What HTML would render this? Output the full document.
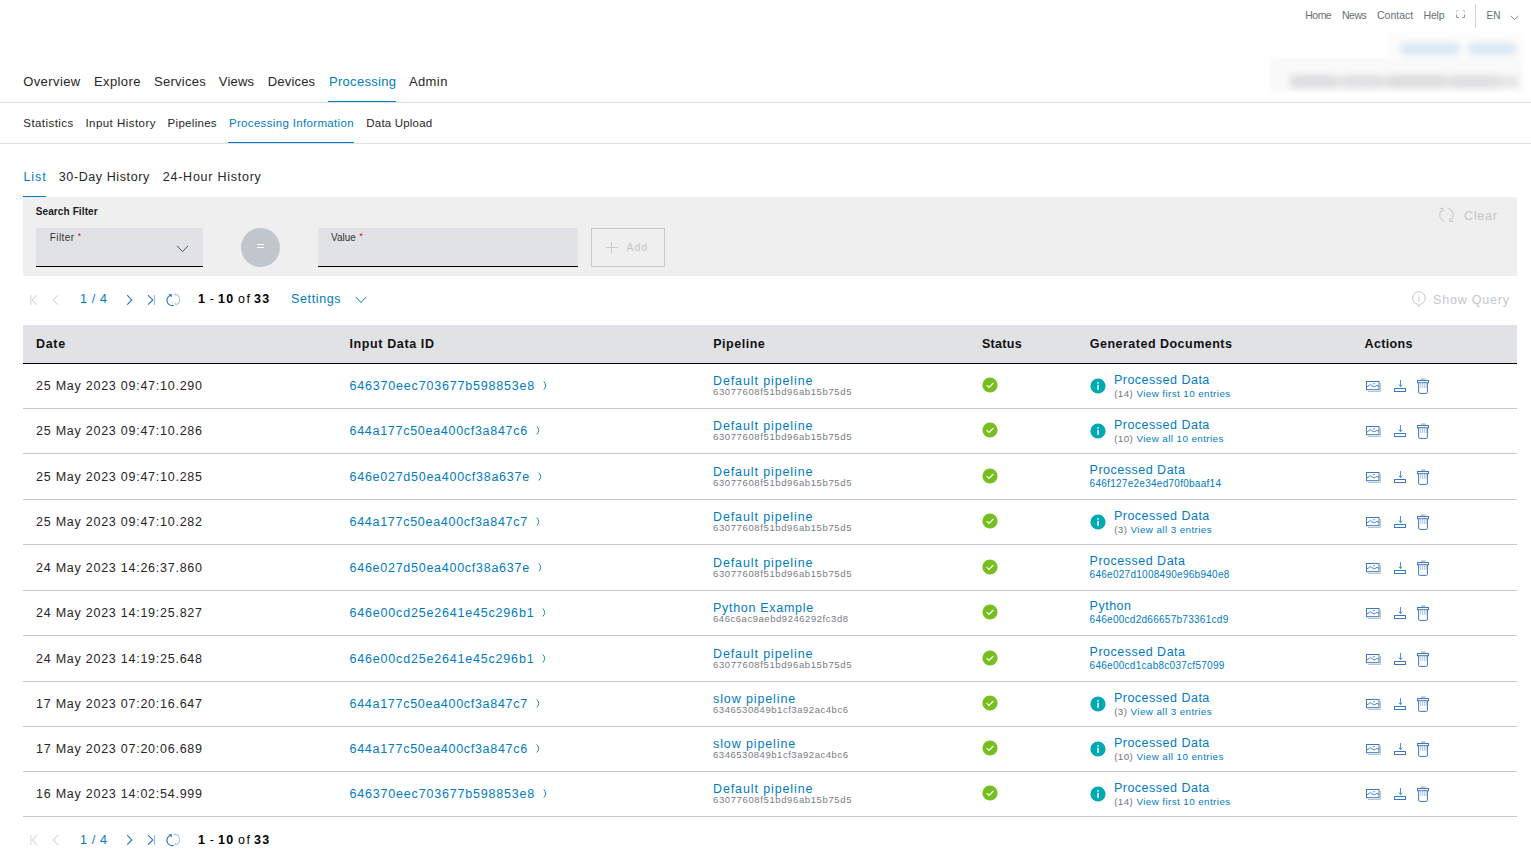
<!DOCTYPE html>
<html><head><meta charset="utf-8"><style>
html,body{margin:0;padding:0;background:#fff;}
body{width:1531px;height:862px;position:relative;overflow:hidden;font-family:"Liberation Sans",sans-serif;}
.t{position:absolute;white-space:nowrap;}
.b{position:absolute;}
svg.b{overflow:visible}
</style></head><body>
<div class="t" style="left:1305.30px;top:10.00px;font-size:10.5px;line-height:10.5px;color:#686d72;letter-spacing:-0.533px;">Home</div>
<div class="t" style="left:1342.00px;top:10.00px;font-size:10.5px;line-height:10.5px;color:#686d72;letter-spacing:-0.517px;">News</div>
<div class="t" style="left:1377.00px;top:10.00px;font-size:10.5px;line-height:10.5px;color:#686d72;letter-spacing:0.017px;">Contact</div>
<div class="t" style="left:1423.50px;top:10.00px;font-size:10.5px;line-height:10.5px;color:#686d72;letter-spacing:-0.167px;">Help</div>
<div class="t" style="left:1486.50px;top:11.00px;font-size:10px;line-height:10px;color:#686d72;letter-spacing:0.000px;">EN</div>
<svg class="b" style="left:1455px;top:9px" width="11" height="10" viewBox="0 0 11 10"><path d="M1.5 3.5V1.5H3.5M7.5 1.5H9.5V3.5" fill="none" stroke="#c4c8cc" stroke-width="0.9"/><path d="M9.5 5.5V8.5H7M4 8.5H1.5V5.5" fill="none" stroke="#8a9097" stroke-width="0.9"/></svg>
<div class="b" style="left:1475px;top:4px;width:1px;height:24px;background:#d0d4d8"></div>
<svg class="b" style="left:1509.5px;top:14.5px" width="10" height="7" viewBox="0 0 10 7"><path d="M0.8 0.8L4.6 4.6L8.4 0.8" fill="none" stroke="#7b8085" stroke-width="0.9"/></svg>
<div class="b" style="left:1270px;top:58px;width:253px;height:34px;background:#f9f9f9;filter:blur(2.5px)"></div>
<div class="b" style="left:1385px;top:32px;width:138px;height:26px;background:#fcfcfc;filter:blur(3px)"></div>
<div class="b" style="left:1400px;top:43px;width:60px;height:12px;background:#d9e7f2;filter:blur(3.5px);border-radius:4px"></div>
<div class="b" style="left:1468px;top:43px;width:48px;height:12px;background:#d9e7f2;filter:blur(3.5px);border-radius:4px"></div>
<div class="b" style="left:1290px;top:76px;width:228px;height:11px;background:#e4e5e6;filter:blur(3px)"></div>
<div class="b" style="left:1292px;top:77px;width:44px;height:9px;background:#dcdddf;filter:blur(3.5px)"></div>
<div class="b" style="left:1344px;top:77px;width:36px;height:9px;background:#dfe0e2;filter:blur(3.5px)"></div>
<div class="b" style="left:1389px;top:77px;width:56px;height:9px;background:#dddcd6;filter:blur(3.5px)"></div>
<div class="b" style="left:1452px;top:77px;width:46px;height:9px;background:#dedfe1;filter:blur(3.5px)"></div>
<div class="t" style="left:23.20px;top:75.00px;font-size:13px;line-height:13px;color:#262626;letter-spacing:0.407px;">Overview</div>
<div class="t" style="left:94.00px;top:75.00px;font-size:13px;line-height:13px;color:#262626;letter-spacing:0.383px;">Explore</div>
<div class="t" style="left:154.10px;top:75.00px;font-size:13px;line-height:13px;color:#262626;letter-spacing:0.250px;">Services</div>
<div class="t" style="left:218.80px;top:75.00px;font-size:13px;line-height:13px;color:#262626;letter-spacing:0.187px;">Views</div>
<div class="t" style="left:267.80px;top:75.00px;font-size:13px;line-height:13px;color:#262626;letter-spacing:0.175px;">Devices</div>
<div class="t" style="left:328.90px;top:75.00px;font-size:13px;line-height:13px;color:#007bc0;letter-spacing:0.322px;">Processing</div>
<div class="t" style="left:408.90px;top:75.00px;font-size:13px;line-height:13px;color:#262626;letter-spacing:0.412px;">Admin</div>
<div class="b" style="left:0px;top:102px;width:1531px;height:1px;background:#dfe0e1"></div>
<div class="b" style="left:328px;top:101px;width:68px;height:1px;background:#007bc0"></div>
<div class="t" style="left:23.30px;top:118.00px;font-size:11.5px;line-height:11.5px;color:#262626;letter-spacing:0.433px;">Statistics</div>
<div class="t" style="left:85.40px;top:118.00px;font-size:11.5px;line-height:11.5px;color:#262626;letter-spacing:0.462px;">Input History</div>
<div class="t" style="left:167.60px;top:118.00px;font-size:11.5px;line-height:11.5px;color:#262626;letter-spacing:0.294px;">Pipelines</div>
<div class="t" style="left:228.90px;top:118.00px;font-size:11.5px;line-height:11.5px;color:#007bc0;letter-spacing:0.338px;">Processing Information</div>
<div class="t" style="left:366.30px;top:118.00px;font-size:11.5px;line-height:11.5px;color:#262626;letter-spacing:0.195px;">Data Upload</div>
<div class="b" style="left:0px;top:143px;width:1531px;height:1px;background:#dfe0e1"></div>
<div class="b" style="left:228px;top:142px;width:126px;height:1px;background:#007bc0"></div>
<div class="t" style="left:23.50px;top:171.00px;font-size:12.5px;line-height:12.5px;color:#007bc0;letter-spacing:0.883px;">List</div>
<div class="t" style="left:58.80px;top:171.00px;font-size:12.5px;line-height:12.5px;color:#262626;letter-spacing:0.596px;">30-Day History</div>
<div class="t" style="left:162.80px;top:171.00px;font-size:12.5px;line-height:12.5px;color:#262626;letter-spacing:0.750px;">24-Hour History</div>
<div class="b" style="left:23px;top:196px;width:23px;height:1px;background:#007bc0"></div>
<div class="b" style="left:23px;top:197px;width:1494px;height:79px;background:#efefef"></div>
<div class="t" style="left:35.70px;top:207.00px;font-size:10px;line-height:10px;color:#1a1a1a;font-weight:bold;letter-spacing:0.117px;">Search Filter</div>
<div class="b" style="left:36px;top:228px;width:167px;height:38px;background:#e0e2e5;border-bottom:1px solid #000"></div>
<div class="t" style="left:49.70px;top:233.00px;font-size:10px;line-height:10px;color:#333;letter-spacing:0.440px;">Filter</div>
<div class="t" style="left:77.70px;top:232.00px;font-size:8.5px;line-height:8.5px;color:#e0001b;letter-spacing:0.000px;">*</div>
<svg class="b" style="left:176px;top:245px" width="13" height="8" viewBox="0 0 13 8"><path d="M1 0.8L6.5 6.6L12 0.8" fill="none" stroke="#444" stroke-width="0.9"/></svg>
<div class="b" style="left:241px;top:228px;width:39px;height:39px;border-radius:50%;background:#c1c6cc"></div>
<div class="b" style="left:257px;top:244px;width:7px;height:1px;background:#fff"></div>
<div class="b" style="left:257px;top:247px;width:7px;height:1px;background:#fff"></div>
<div class="b" style="left:318px;top:228px;width:260px;height:38px;background:#e0e2e5;border-bottom:1px solid #000"></div>
<div class="t" style="left:331.00px;top:233.00px;font-size:10px;line-height:10px;color:#333;letter-spacing:0.012px;">Value</div>
<div class="t" style="left:359.50px;top:232.00px;font-size:8.5px;line-height:8.5px;color:#e0001b;letter-spacing:0.000px;">*</div>
<div class="b" style="left:591px;top:228px;width:74px;height:39px;border:1px solid #c4cad0;box-sizing:border-box"></div>
<div class="b" style="left:606px;top:247px;width:12px;height:1px;background:#c4cad0"></div>
<div class="b" style="left:611px;top:242px;width:1px;height:11px;background:#c4cad0"></div>
<div class="t" style="left:626.60px;top:242.00px;font-size:10.5px;line-height:10.5px;color:#c1c7cc;letter-spacing:0.850px;">Add</div>
<svg class="b" style="left:1437px;top:206px" width="18" height="18" viewBox="0 0 18 18"><path d="M7.7 15.6A6.8 6.8 0 0 1 5.1 3.8M10.7 2.3A6.8 6.8 0 0 1 13.9 14.2M2.6 2.3H6V5.6M12.9 12V15.4H16.4" fill="none" stroke="#c1c7cc" stroke-width="1"/></svg>
<div class="t" style="left:1464.00px;top:210.00px;font-size:12.5px;line-height:12.5px;color:#c1c7cc;letter-spacing:0.737px;">Clear</div>
<svg class="b" style="left:25px;top:290px" width="160" height="20" viewBox="0 0 160 20"><path d="M5.8 5V15M12 5L7.3 10L12 15M33.2 5L28.3 10L33.2 15" fill="none" stroke="#dde1e4" stroke-width="1.4"/><path d="M102.2 5.2L106.8 9.9L102.2 14.6M123 5.2L127.8 9.9L123 14.6" fill="none" stroke="#1f74c2" stroke-width="1.1"/><path d="M129.4 5V15" stroke="#8fb6de" stroke-width="1"/><path d="M145.8 5.2A5.2 5.2 0 0 0 148.6 15.4" fill="none" stroke="#1f74c2" stroke-width="1.1"/><path d="M144.3 4.6H146.4V6.7Z" fill="#1f74c2" stroke="#1f74c2" stroke-width="0.8"/><path d="M148.8 4.4A5.2 5.2 0 0 1 151.8 14.2" fill="none" stroke="#a9c6e3" stroke-width="1.1"/><path d="M150.4 12.5V14.6H152.5" fill="none" stroke="#a9c6e3" stroke-width="0.9"/></svg>
<div class="t" style="left:80.00px;top:293.00px;font-size:12.5px;line-height:12.5px;color:#007bc0;letter-spacing:0.675px;">1 / 4</div>
<div class="t" style="left:198.00px;top:293.00px;font-size:12.5px;line-height:12.5px;color:#000;font-weight:bold;letter-spacing:0.000px;">1</div>
<div class="t" style="left:209.70px;top:293.00px;font-size:12.5px;line-height:12.5px;color:#000;letter-spacing:0.000px;">-</div>
<div class="t" style="left:218.00px;top:293.00px;font-size:12.5px;line-height:12.5px;color:#000;font-weight:bold;letter-spacing:1.400px;">10</div>
<div class="t" style="left:238.00px;top:293.00px;font-size:12.5px;line-height:12.5px;color:#000;letter-spacing:1.550px;">of</div>
<div class="t" style="left:254.00px;top:293.00px;font-size:12.5px;line-height:12.5px;color:#000;font-weight:bold;letter-spacing:1.200px;">33</div>
<div class="t" style="left:291.00px;top:293.00px;font-size:12.5px;line-height:12.5px;color:#007bc0;letter-spacing:0.636px;">Settings</div>
<svg class="b" style="left:355px;top:296px" width="12" height="8" viewBox="0 0 12 8"><path d="M0.8 1L6 6.5L11.2 1" fill="none" stroke="#007bc0" stroke-width="1"/></svg>
<svg class="b" style="left:1410px;top:290px" width="17" height="18" viewBox="0 0 17 18"><path d="M7.6 14.2A6.3 6.3 0 1 1 10.2 14.2L8.9 16.6Z" fill="none" stroke="#c1c7cc" stroke-width="1"/><path d="M8.9 6.5V11.5M8.9 4.3V5.4" stroke="#c1c7cc" stroke-width="1"/></svg>
<div class="t" style="left:1433.00px;top:294.00px;font-size:12.5px;line-height:12.5px;color:#c1c7cc;letter-spacing:0.800px;">Show Query</div>
<div class="b" style="left:23px;top:325px;width:1494px;height:38px;background:#e0e2e5"></div>
<div class="b" style="left:23px;top:363px;width:1494px;height:1px;background:#000"></div>
<div class="t" style="left:36.10px;top:338.00px;font-size:12.5px;line-height:12.5px;color:#111;font-weight:bold;letter-spacing:0.633px;">Date</div>
<div class="t" style="left:349.50px;top:338.00px;font-size:12.5px;line-height:12.5px;color:#111;font-weight:bold;letter-spacing:0.617px;">Input Data ID</div>
<div class="t" style="left:713.20px;top:338.00px;font-size:12.5px;line-height:12.5px;color:#111;font-weight:bold;letter-spacing:0.521px;">Pipeline</div>
<div class="t" style="left:981.90px;top:338.00px;font-size:12.5px;line-height:12.5px;color:#111;font-weight:bold;letter-spacing:0.300px;">Status</div>
<div class="t" style="left:1089.80px;top:338.00px;font-size:12.5px;line-height:12.5px;color:#111;font-weight:bold;letter-spacing:0.486px;">Generated Documents</div>
<div class="t" style="left:1364.60px;top:338.00px;font-size:12.5px;line-height:12.5px;color:#111;font-weight:bold;letter-spacing:0.342px;">Actions</div>
<div class="b" style="left:23px;top:408px;width:1494px;height:1px;background:#c4c9ce"></div>
<div class="t" style="left:36.00px;top:380.00px;font-size:12.5px;line-height:12.5px;color:#262626;letter-spacing:0.752px;">25 May 2023 09:47:10.290</div>
<div class="t" style="left:349.50px;top:380.00px;font-size:12.5px;line-height:12.5px;color:#007bc0;letter-spacing:0.811px;">646370eec703677b598853e8</div>
<svg class="b" style="left:542.8px;top:381.4px" width="5" height="9" viewBox="0 0 5 9"><path d="M0.8 0.5Q4.6 4.5 0.8 8.5" fill="none" stroke="#007bc0" stroke-width="0.9"/></svg>
<div class="t" style="left:713.00px;top:375.00px;font-size:12.5px;line-height:12.5px;color:#007bc0;letter-spacing:0.883px;">Default pipeline</div>
<div class="t" style="left:713.00px;top:387.00px;font-size:9.5px;line-height:9.5px;color:#777c81;letter-spacing:0.620px;">63077608f51bd96ab15b75d5</div>
<svg class="b" style="left:981.5px;top:377.2px" width="16" height="16" viewBox="0 0 16 16"><circle cx="8" cy="8" r="7.6" fill="#78be20"/><path d="M4.6 8.2L7 10.4L11.4 6" fill="none" stroke="#fff" stroke-width="1.1"/></svg>
<svg class="b" style="left:1089.5px;top:378.1px" width="16" height="16" viewBox="0 0 16 16"><circle cx="8" cy="8" r="7.6" fill="#00a8b0"/><rect x="7.3" y="6.8" width="1.5" height="5" fill="#fff"/><rect x="7.3" y="4.2" width="1.5" height="1.5" fill="#fff"/></svg>
<div class="t" style="left:1113.90px;top:374.00px;font-size:12.5px;line-height:12.5px;color:#007bc0;letter-spacing:0.500px;">Processed Data</div>
<div class="t" style="left:1114.20px;top:389.00px;font-size:9.8px;line-height:9.8px;color:#71767c;letter-spacing:0.420px;">(14)</div>
<div class="t" style="left:1136.45px;top:389.00px;font-size:9.8px;line-height:9.8px;color:#007bc0;letter-spacing:0.420px;">View first 10 entries</div>
<svg class="b" style="left:1360px;top:376px" width="75" height="20" viewBox="0 0 75 20"><path d="M20.5 7V15.5H8" fill="none" stroke="#b9c7d3" stroke-width="1"/><rect x="6.5" y="5.5" width="12.5" height="8.2" fill="none" stroke="#3b79c1" stroke-width="1"/><path d="M7 11L10.5 8.6L14 11L17 9.4L19 10.5" fill="none" stroke="#3b79c1" stroke-width="0.9"/><circle cx="14" cy="7.8" r="0.8" fill="#3b79c1"/><path d="M40.5 4V10.5M38.8 8.6L40.5 10.6L42.2 8.6" fill="none" stroke="#3b85c9" stroke-width="0.9"/><rect x="34.5" y="12.5" width="11" height="3" fill="none" stroke="#3b79c1" stroke-width="1"/><rect x="61" y="2.3" width="4.6" height="1.8" fill="#b9c7d3"/><rect x="57.5" y="4.5" width="11" height="2.2" fill="none" stroke="#3b79c1" stroke-width="1"/><path d="M58.6 6.8V16.3Q58.6 17.4 59.7 17.4H66.3Q67.4 17.4 67.4 16.3V6.8" fill="none" stroke="#3b79c1" stroke-width="1"/><path d="M60.6 7V12M62.5 7V12M64.4 7V12M66.2 7V12" stroke="#a8b8dc" stroke-width="0.8"/></svg>
<div class="b" style="left:23px;top:453px;width:1494px;height:1px;background:#c4c9ce"></div>
<div class="t" style="left:36.00px;top:425.00px;font-size:12.5px;line-height:12.5px;color:#262626;letter-spacing:0.752px;">25 May 2023 09:47:10.286</div>
<div class="t" style="left:349.50px;top:425.00px;font-size:12.5px;line-height:12.5px;color:#007bc0;letter-spacing:0.715px;">644a177c50ea400cf3a847c6</div>
<svg class="b" style="left:535.7px;top:426.4px" width="5" height="9" viewBox="0 0 5 9"><path d="M0.8 0.5Q4.6 4.5 0.8 8.5" fill="none" stroke="#007bc0" stroke-width="0.9"/></svg>
<div class="t" style="left:713.00px;top:420.00px;font-size:12.5px;line-height:12.5px;color:#007bc0;letter-spacing:0.883px;">Default pipeline</div>
<div class="t" style="left:713.00px;top:432.00px;font-size:9.5px;line-height:9.5px;color:#777c81;letter-spacing:0.620px;">63077608f51bd96ab15b75d5</div>
<svg class="b" style="left:981.5px;top:422.2px" width="16" height="16" viewBox="0 0 16 16"><circle cx="8" cy="8" r="7.6" fill="#78be20"/><path d="M4.6 8.2L7 10.4L11.4 6" fill="none" stroke="#fff" stroke-width="1.1"/></svg>
<svg class="b" style="left:1089.5px;top:423.1px" width="16" height="16" viewBox="0 0 16 16"><circle cx="8" cy="8" r="7.6" fill="#00a8b0"/><rect x="7.3" y="6.8" width="1.5" height="5" fill="#fff"/><rect x="7.3" y="4.2" width="1.5" height="1.5" fill="#fff"/></svg>
<div class="t" style="left:1113.90px;top:419.00px;font-size:12.5px;line-height:12.5px;color:#007bc0;letter-spacing:0.500px;">Processed Data</div>
<div class="t" style="left:1114.20px;top:434.00px;font-size:9.8px;line-height:9.8px;color:#71767c;letter-spacing:0.420px;">(10)</div>
<div class="t" style="left:1136.45px;top:434.00px;font-size:9.8px;line-height:9.8px;color:#007bc0;letter-spacing:0.420px;">View all 10 entries</div>
<svg class="b" style="left:1360px;top:421px" width="75" height="20" viewBox="0 0 75 20"><path d="M20.5 7V15.5H8" fill="none" stroke="#b9c7d3" stroke-width="1"/><rect x="6.5" y="5.5" width="12.5" height="8.2" fill="none" stroke="#3b79c1" stroke-width="1"/><path d="M7 11L10.5 8.6L14 11L17 9.4L19 10.5" fill="none" stroke="#3b79c1" stroke-width="0.9"/><circle cx="14" cy="7.8" r="0.8" fill="#3b79c1"/><path d="M40.5 4V10.5M38.8 8.6L40.5 10.6L42.2 8.6" fill="none" stroke="#3b85c9" stroke-width="0.9"/><rect x="34.5" y="12.5" width="11" height="3" fill="none" stroke="#3b79c1" stroke-width="1"/><rect x="61" y="2.3" width="4.6" height="1.8" fill="#b9c7d3"/><rect x="57.5" y="4.5" width="11" height="2.2" fill="none" stroke="#3b79c1" stroke-width="1"/><path d="M58.6 6.8V16.3Q58.6 17.4 59.7 17.4H66.3Q67.4 17.4 67.4 16.3V6.8" fill="none" stroke="#3b79c1" stroke-width="1"/><path d="M60.6 7V12M62.5 7V12M64.4 7V12M66.2 7V12" stroke="#a8b8dc" stroke-width="0.8"/></svg>
<div class="b" style="left:23px;top:499px;width:1494px;height:1px;background:#c4c9ce"></div>
<div class="t" style="left:36.00px;top:471.00px;font-size:12.5px;line-height:12.5px;color:#262626;letter-spacing:0.752px;">25 May 2023 09:47:10.285</div>
<div class="t" style="left:349.50px;top:471.00px;font-size:12.5px;line-height:12.5px;color:#007bc0;letter-spacing:0.737px;">646e027d50ea400cf38a637e</div>
<svg class="b" style="left:537.6px;top:472.4px" width="5" height="9" viewBox="0 0 5 9"><path d="M0.8 0.5Q4.6 4.5 0.8 8.5" fill="none" stroke="#007bc0" stroke-width="0.9"/></svg>
<div class="t" style="left:713.00px;top:466.00px;font-size:12.5px;line-height:12.5px;color:#007bc0;letter-spacing:0.883px;">Default pipeline</div>
<div class="t" style="left:713.00px;top:478.00px;font-size:9.5px;line-height:9.5px;color:#777c81;letter-spacing:0.620px;">63077608f51bd96ab15b75d5</div>
<svg class="b" style="left:981.5px;top:468.2px" width="16" height="16" viewBox="0 0 16 16"><circle cx="8" cy="8" r="7.6" fill="#78be20"/><path d="M4.6 8.2L7 10.4L11.4 6" fill="none" stroke="#fff" stroke-width="1.1"/></svg>
<div class="t" style="left:1089.60px;top:464.00px;font-size:12.5px;line-height:12.5px;color:#007bc0;letter-spacing:0.500px;">Processed Data</div>
<div class="t" style="left:1089.60px;top:479.00px;font-size:10px;line-height:10px;color:#007bc0;letter-spacing:0.272px;">646f127e2e34ed70f0baaf14</div>
<svg class="b" style="left:1360px;top:467px" width="75" height="20" viewBox="0 0 75 20"><path d="M20.5 7V15.5H8" fill="none" stroke="#b9c7d3" stroke-width="1"/><rect x="6.5" y="5.5" width="12.5" height="8.2" fill="none" stroke="#3b79c1" stroke-width="1"/><path d="M7 11L10.5 8.6L14 11L17 9.4L19 10.5" fill="none" stroke="#3b79c1" stroke-width="0.9"/><circle cx="14" cy="7.8" r="0.8" fill="#3b79c1"/><path d="M40.5 4V10.5M38.8 8.6L40.5 10.6L42.2 8.6" fill="none" stroke="#3b85c9" stroke-width="0.9"/><rect x="34.5" y="12.5" width="11" height="3" fill="none" stroke="#3b79c1" stroke-width="1"/><rect x="61" y="2.3" width="4.6" height="1.8" fill="#b9c7d3"/><rect x="57.5" y="4.5" width="11" height="2.2" fill="none" stroke="#3b79c1" stroke-width="1"/><path d="M58.6 6.8V16.3Q58.6 17.4 59.7 17.4H66.3Q67.4 17.4 67.4 16.3V6.8" fill="none" stroke="#3b79c1" stroke-width="1"/><path d="M60.6 7V12M62.5 7V12M64.4 7V12M66.2 7V12" stroke="#a8b8dc" stroke-width="0.8"/></svg>
<div class="b" style="left:23px;top:544px;width:1494px;height:1px;background:#c4c9ce"></div>
<div class="t" style="left:36.00px;top:516.00px;font-size:12.5px;line-height:12.5px;color:#262626;letter-spacing:0.752px;">25 May 2023 09:47:10.282</div>
<div class="t" style="left:349.50px;top:516.00px;font-size:12.5px;line-height:12.5px;color:#007bc0;letter-spacing:0.715px;">644a177c50ea400cf3a847c7</div>
<svg class="b" style="left:535.7px;top:517.4px" width="5" height="9" viewBox="0 0 5 9"><path d="M0.8 0.5Q4.6 4.5 0.8 8.5" fill="none" stroke="#007bc0" stroke-width="0.9"/></svg>
<div class="t" style="left:713.00px;top:511.00px;font-size:12.5px;line-height:12.5px;color:#007bc0;letter-spacing:0.883px;">Default pipeline</div>
<div class="t" style="left:713.00px;top:523.00px;font-size:9.5px;line-height:9.5px;color:#777c81;letter-spacing:0.620px;">63077608f51bd96ab15b75d5</div>
<svg class="b" style="left:981.5px;top:513.2px" width="16" height="16" viewBox="0 0 16 16"><circle cx="8" cy="8" r="7.6" fill="#78be20"/><path d="M4.6 8.2L7 10.4L11.4 6" fill="none" stroke="#fff" stroke-width="1.1"/></svg>
<svg class="b" style="left:1089.5px;top:514.1px" width="16" height="16" viewBox="0 0 16 16"><circle cx="8" cy="8" r="7.6" fill="#00a8b0"/><rect x="7.3" y="6.8" width="1.5" height="5" fill="#fff"/><rect x="7.3" y="4.2" width="1.5" height="1.5" fill="#fff"/></svg>
<div class="t" style="left:1113.90px;top:510.00px;font-size:12.5px;line-height:12.5px;color:#007bc0;letter-spacing:0.500px;">Processed Data</div>
<div class="t" style="left:1114.20px;top:525.00px;font-size:9.8px;line-height:9.8px;color:#71767c;letter-spacing:0.420px;">(3)</div>
<div class="t" style="left:1130.58px;top:525.00px;font-size:9.8px;line-height:9.8px;color:#007bc0;letter-spacing:0.420px;">View all 3 entries</div>
<svg class="b" style="left:1360px;top:512px" width="75" height="20" viewBox="0 0 75 20"><path d="M20.5 7V15.5H8" fill="none" stroke="#b9c7d3" stroke-width="1"/><rect x="6.5" y="5.5" width="12.5" height="8.2" fill="none" stroke="#3b79c1" stroke-width="1"/><path d="M7 11L10.5 8.6L14 11L17 9.4L19 10.5" fill="none" stroke="#3b79c1" stroke-width="0.9"/><circle cx="14" cy="7.8" r="0.8" fill="#3b79c1"/><path d="M40.5 4V10.5M38.8 8.6L40.5 10.6L42.2 8.6" fill="none" stroke="#3b85c9" stroke-width="0.9"/><rect x="34.5" y="12.5" width="11" height="3" fill="none" stroke="#3b79c1" stroke-width="1"/><rect x="61" y="2.3" width="4.6" height="1.8" fill="#b9c7d3"/><rect x="57.5" y="4.5" width="11" height="2.2" fill="none" stroke="#3b79c1" stroke-width="1"/><path d="M58.6 6.8V16.3Q58.6 17.4 59.7 17.4H66.3Q67.4 17.4 67.4 16.3V6.8" fill="none" stroke="#3b79c1" stroke-width="1"/><path d="M60.6 7V12M62.5 7V12M64.4 7V12M66.2 7V12" stroke="#a8b8dc" stroke-width="0.8"/></svg>
<div class="b" style="left:23px;top:590px;width:1494px;height:1px;background:#c4c9ce"></div>
<div class="t" style="left:36.00px;top:562.00px;font-size:12.5px;line-height:12.5px;color:#262626;letter-spacing:0.752px;">24 May 2023 14:26:37.860</div>
<div class="t" style="left:349.50px;top:562.00px;font-size:12.5px;line-height:12.5px;color:#007bc0;letter-spacing:0.737px;">646e027d50ea400cf38a637e</div>
<svg class="b" style="left:537.6px;top:563.4px" width="5" height="9" viewBox="0 0 5 9"><path d="M0.8 0.5Q4.6 4.5 0.8 8.5" fill="none" stroke="#007bc0" stroke-width="0.9"/></svg>
<div class="t" style="left:713.00px;top:557.00px;font-size:12.5px;line-height:12.5px;color:#007bc0;letter-spacing:0.883px;">Default pipeline</div>
<div class="t" style="left:713.00px;top:569.00px;font-size:9.5px;line-height:9.5px;color:#777c81;letter-spacing:0.620px;">63077608f51bd96ab15b75d5</div>
<svg class="b" style="left:981.5px;top:559.2px" width="16" height="16" viewBox="0 0 16 16"><circle cx="8" cy="8" r="7.6" fill="#78be20"/><path d="M4.6 8.2L7 10.4L11.4 6" fill="none" stroke="#fff" stroke-width="1.1"/></svg>
<div class="t" style="left:1089.60px;top:555.00px;font-size:12.5px;line-height:12.5px;color:#007bc0;letter-spacing:0.500px;">Processed Data</div>
<div class="t" style="left:1089.60px;top:570.00px;font-size:10px;line-height:10px;color:#007bc0;letter-spacing:0.272px;">646e027d1008490e96b940e8</div>
<svg class="b" style="left:1360px;top:558px" width="75" height="20" viewBox="0 0 75 20"><path d="M20.5 7V15.5H8" fill="none" stroke="#b9c7d3" stroke-width="1"/><rect x="6.5" y="5.5" width="12.5" height="8.2" fill="none" stroke="#3b79c1" stroke-width="1"/><path d="M7 11L10.5 8.6L14 11L17 9.4L19 10.5" fill="none" stroke="#3b79c1" stroke-width="0.9"/><circle cx="14" cy="7.8" r="0.8" fill="#3b79c1"/><path d="M40.5 4V10.5M38.8 8.6L40.5 10.6L42.2 8.6" fill="none" stroke="#3b85c9" stroke-width="0.9"/><rect x="34.5" y="12.5" width="11" height="3" fill="none" stroke="#3b79c1" stroke-width="1"/><rect x="61" y="2.3" width="4.6" height="1.8" fill="#b9c7d3"/><rect x="57.5" y="4.5" width="11" height="2.2" fill="none" stroke="#3b79c1" stroke-width="1"/><path d="M58.6 6.8V16.3Q58.6 17.4 59.7 17.4H66.3Q67.4 17.4 67.4 16.3V6.8" fill="none" stroke="#3b79c1" stroke-width="1"/><path d="M60.6 7V12M62.5 7V12M64.4 7V12M66.2 7V12" stroke="#a8b8dc" stroke-width="0.8"/></svg>
<div class="b" style="left:23px;top:635px;width:1494px;height:1px;background:#c4c9ce"></div>
<div class="t" style="left:36.00px;top:607.00px;font-size:12.5px;line-height:12.5px;color:#262626;letter-spacing:0.752px;">24 May 2023 14:19:25.827</div>
<div class="t" style="left:349.50px;top:607.00px;font-size:12.5px;line-height:12.5px;color:#007bc0;letter-spacing:0.811px;">646e00cd25e2641e45c296b1</div>
<svg class="b" style="left:542.1px;top:608.4px" width="5" height="9" viewBox="0 0 5 9"><path d="M0.8 0.5Q4.6 4.5 0.8 8.5" fill="none" stroke="#007bc0" stroke-width="0.9"/></svg>
<div class="t" style="left:713.00px;top:602.00px;font-size:12.5px;line-height:12.5px;color:#007bc0;letter-spacing:0.700px;">Python Example</div>
<div class="t" style="left:713.00px;top:614.00px;font-size:9.5px;line-height:9.5px;color:#777c81;letter-spacing:0.541px;">646c6ac9aebd9246292fc3d8</div>
<svg class="b" style="left:981.5px;top:604.2px" width="16" height="16" viewBox="0 0 16 16"><circle cx="8" cy="8" r="7.6" fill="#78be20"/><path d="M4.6 8.2L7 10.4L11.4 6" fill="none" stroke="#fff" stroke-width="1.1"/></svg>
<div class="t" style="left:1089.60px;top:600.00px;font-size:12.5px;line-height:12.5px;color:#007bc0;letter-spacing:0.500px;">Python</div>
<div class="t" style="left:1089.60px;top:615.00px;font-size:10px;line-height:10px;color:#007bc0;letter-spacing:0.272px;">646e00cd2d66657b73361cd9</div>
<svg class="b" style="left:1360px;top:603px" width="75" height="20" viewBox="0 0 75 20"><path d="M20.5 7V15.5H8" fill="none" stroke="#b9c7d3" stroke-width="1"/><rect x="6.5" y="5.5" width="12.5" height="8.2" fill="none" stroke="#3b79c1" stroke-width="1"/><path d="M7 11L10.5 8.6L14 11L17 9.4L19 10.5" fill="none" stroke="#3b79c1" stroke-width="0.9"/><circle cx="14" cy="7.8" r="0.8" fill="#3b79c1"/><path d="M40.5 4V10.5M38.8 8.6L40.5 10.6L42.2 8.6" fill="none" stroke="#3b85c9" stroke-width="0.9"/><rect x="34.5" y="12.5" width="11" height="3" fill="none" stroke="#3b79c1" stroke-width="1"/><rect x="61" y="2.3" width="4.6" height="1.8" fill="#b9c7d3"/><rect x="57.5" y="4.5" width="11" height="2.2" fill="none" stroke="#3b79c1" stroke-width="1"/><path d="M58.6 6.8V16.3Q58.6 17.4 59.7 17.4H66.3Q67.4 17.4 67.4 16.3V6.8" fill="none" stroke="#3b79c1" stroke-width="1"/><path d="M60.6 7V12M62.5 7V12M64.4 7V12M66.2 7V12" stroke="#a8b8dc" stroke-width="0.8"/></svg>
<div class="b" style="left:23px;top:681px;width:1494px;height:1px;background:#c4c9ce"></div>
<div class="t" style="left:36.00px;top:653.00px;font-size:12.5px;line-height:12.5px;color:#262626;letter-spacing:0.752px;">24 May 2023 14:19:25.648</div>
<div class="t" style="left:349.50px;top:653.00px;font-size:12.5px;line-height:12.5px;color:#007bc0;letter-spacing:0.811px;">646e00cd25e2641e45c296b1</div>
<svg class="b" style="left:542.1px;top:654.4px" width="5" height="9" viewBox="0 0 5 9"><path d="M0.8 0.5Q4.6 4.5 0.8 8.5" fill="none" stroke="#007bc0" stroke-width="0.9"/></svg>
<div class="t" style="left:713.00px;top:648.00px;font-size:12.5px;line-height:12.5px;color:#007bc0;letter-spacing:0.883px;">Default pipeline</div>
<div class="t" style="left:713.00px;top:660.00px;font-size:9.5px;line-height:9.5px;color:#777c81;letter-spacing:0.620px;">63077608f51bd96ab15b75d5</div>
<svg class="b" style="left:981.5px;top:650.2px" width="16" height="16" viewBox="0 0 16 16"><circle cx="8" cy="8" r="7.6" fill="#78be20"/><path d="M4.6 8.2L7 10.4L11.4 6" fill="none" stroke="#fff" stroke-width="1.1"/></svg>
<div class="t" style="left:1089.60px;top:646.00px;font-size:12.5px;line-height:12.5px;color:#007bc0;letter-spacing:0.500px;">Processed Data</div>
<div class="t" style="left:1089.60px;top:661.00px;font-size:10px;line-height:10px;color:#007bc0;letter-spacing:0.272px;">646e00cd1cab8c037cf57099</div>
<svg class="b" style="left:1360px;top:649px" width="75" height="20" viewBox="0 0 75 20"><path d="M20.5 7V15.5H8" fill="none" stroke="#b9c7d3" stroke-width="1"/><rect x="6.5" y="5.5" width="12.5" height="8.2" fill="none" stroke="#3b79c1" stroke-width="1"/><path d="M7 11L10.5 8.6L14 11L17 9.4L19 10.5" fill="none" stroke="#3b79c1" stroke-width="0.9"/><circle cx="14" cy="7.8" r="0.8" fill="#3b79c1"/><path d="M40.5 4V10.5M38.8 8.6L40.5 10.6L42.2 8.6" fill="none" stroke="#3b85c9" stroke-width="0.9"/><rect x="34.5" y="12.5" width="11" height="3" fill="none" stroke="#3b79c1" stroke-width="1"/><rect x="61" y="2.3" width="4.6" height="1.8" fill="#b9c7d3"/><rect x="57.5" y="4.5" width="11" height="2.2" fill="none" stroke="#3b79c1" stroke-width="1"/><path d="M58.6 6.8V16.3Q58.6 17.4 59.7 17.4H66.3Q67.4 17.4 67.4 16.3V6.8" fill="none" stroke="#3b79c1" stroke-width="1"/><path d="M60.6 7V12M62.5 7V12M64.4 7V12M66.2 7V12" stroke="#a8b8dc" stroke-width="0.8"/></svg>
<div class="b" style="left:23px;top:726px;width:1494px;height:1px;background:#c4c9ce"></div>
<div class="t" style="left:36.00px;top:698.00px;font-size:12.5px;line-height:12.5px;color:#262626;letter-spacing:0.752px;">17 May 2023 07:20:16.647</div>
<div class="t" style="left:349.50px;top:698.00px;font-size:12.5px;line-height:12.5px;color:#007bc0;letter-spacing:0.715px;">644a177c50ea400cf3a847c7</div>
<svg class="b" style="left:535.7px;top:699.4px" width="5" height="9" viewBox="0 0 5 9"><path d="M0.8 0.5Q4.6 4.5 0.8 8.5" fill="none" stroke="#007bc0" stroke-width="0.9"/></svg>
<div class="t" style="left:713.00px;top:693.00px;font-size:12.5px;line-height:12.5px;color:#007bc0;letter-spacing:0.883px;">slow pipeline</div>
<div class="t" style="left:713.00px;top:705.00px;font-size:9.5px;line-height:9.5px;color:#777c81;letter-spacing:0.541px;">6346530849b1cf3a92ac4bc6</div>
<svg class="b" style="left:981.5px;top:695.2px" width="16" height="16" viewBox="0 0 16 16"><circle cx="8" cy="8" r="7.6" fill="#78be20"/><path d="M4.6 8.2L7 10.4L11.4 6" fill="none" stroke="#fff" stroke-width="1.1"/></svg>
<svg class="b" style="left:1089.5px;top:696.1px" width="16" height="16" viewBox="0 0 16 16"><circle cx="8" cy="8" r="7.6" fill="#00a8b0"/><rect x="7.3" y="6.8" width="1.5" height="5" fill="#fff"/><rect x="7.3" y="4.2" width="1.5" height="1.5" fill="#fff"/></svg>
<div class="t" style="left:1113.90px;top:692.00px;font-size:12.5px;line-height:12.5px;color:#007bc0;letter-spacing:0.500px;">Processed Data</div>
<div class="t" style="left:1114.20px;top:707.00px;font-size:9.8px;line-height:9.8px;color:#71767c;letter-spacing:0.420px;">(3)</div>
<div class="t" style="left:1130.58px;top:707.00px;font-size:9.8px;line-height:9.8px;color:#007bc0;letter-spacing:0.420px;">View all 3 entries</div>
<svg class="b" style="left:1360px;top:694px" width="75" height="20" viewBox="0 0 75 20"><path d="M20.5 7V15.5H8" fill="none" stroke="#b9c7d3" stroke-width="1"/><rect x="6.5" y="5.5" width="12.5" height="8.2" fill="none" stroke="#3b79c1" stroke-width="1"/><path d="M7 11L10.5 8.6L14 11L17 9.4L19 10.5" fill="none" stroke="#3b79c1" stroke-width="0.9"/><circle cx="14" cy="7.8" r="0.8" fill="#3b79c1"/><path d="M40.5 4V10.5M38.8 8.6L40.5 10.6L42.2 8.6" fill="none" stroke="#3b85c9" stroke-width="0.9"/><rect x="34.5" y="12.5" width="11" height="3" fill="none" stroke="#3b79c1" stroke-width="1"/><rect x="61" y="2.3" width="4.6" height="1.8" fill="#b9c7d3"/><rect x="57.5" y="4.5" width="11" height="2.2" fill="none" stroke="#3b79c1" stroke-width="1"/><path d="M58.6 6.8V16.3Q58.6 17.4 59.7 17.4H66.3Q67.4 17.4 67.4 16.3V6.8" fill="none" stroke="#3b79c1" stroke-width="1"/><path d="M60.6 7V12M62.5 7V12M64.4 7V12M66.2 7V12" stroke="#a8b8dc" stroke-width="0.8"/></svg>
<div class="b" style="left:23px;top:771px;width:1494px;height:1px;background:#c4c9ce"></div>
<div class="t" style="left:36.00px;top:743.00px;font-size:12.5px;line-height:12.5px;color:#262626;letter-spacing:0.752px;">17 May 2023 07:20:06.689</div>
<div class="t" style="left:349.50px;top:743.00px;font-size:12.5px;line-height:12.5px;color:#007bc0;letter-spacing:0.715px;">644a177c50ea400cf3a847c6</div>
<svg class="b" style="left:535.7px;top:744.4px" width="5" height="9" viewBox="0 0 5 9"><path d="M0.8 0.5Q4.6 4.5 0.8 8.5" fill="none" stroke="#007bc0" stroke-width="0.9"/></svg>
<div class="t" style="left:713.00px;top:738.00px;font-size:12.5px;line-height:12.5px;color:#007bc0;letter-spacing:0.883px;">slow pipeline</div>
<div class="t" style="left:713.00px;top:750.00px;font-size:9.5px;line-height:9.5px;color:#777c81;letter-spacing:0.541px;">6346530849b1cf3a92ac4bc6</div>
<svg class="b" style="left:981.5px;top:740.2px" width="16" height="16" viewBox="0 0 16 16"><circle cx="8" cy="8" r="7.6" fill="#78be20"/><path d="M4.6 8.2L7 10.4L11.4 6" fill="none" stroke="#fff" stroke-width="1.1"/></svg>
<svg class="b" style="left:1089.5px;top:741.1px" width="16" height="16" viewBox="0 0 16 16"><circle cx="8" cy="8" r="7.6" fill="#00a8b0"/><rect x="7.3" y="6.8" width="1.5" height="5" fill="#fff"/><rect x="7.3" y="4.2" width="1.5" height="1.5" fill="#fff"/></svg>
<div class="t" style="left:1113.90px;top:737.00px;font-size:12.5px;line-height:12.5px;color:#007bc0;letter-spacing:0.500px;">Processed Data</div>
<div class="t" style="left:1114.20px;top:752.00px;font-size:9.8px;line-height:9.8px;color:#71767c;letter-spacing:0.420px;">(10)</div>
<div class="t" style="left:1136.45px;top:752.00px;font-size:9.8px;line-height:9.8px;color:#007bc0;letter-spacing:0.420px;">View all 10 entries</div>
<svg class="b" style="left:1360px;top:739px" width="75" height="20" viewBox="0 0 75 20"><path d="M20.5 7V15.5H8" fill="none" stroke="#b9c7d3" stroke-width="1"/><rect x="6.5" y="5.5" width="12.5" height="8.2" fill="none" stroke="#3b79c1" stroke-width="1"/><path d="M7 11L10.5 8.6L14 11L17 9.4L19 10.5" fill="none" stroke="#3b79c1" stroke-width="0.9"/><circle cx="14" cy="7.8" r="0.8" fill="#3b79c1"/><path d="M40.5 4V10.5M38.8 8.6L40.5 10.6L42.2 8.6" fill="none" stroke="#3b85c9" stroke-width="0.9"/><rect x="34.5" y="12.5" width="11" height="3" fill="none" stroke="#3b79c1" stroke-width="1"/><rect x="61" y="2.3" width="4.6" height="1.8" fill="#b9c7d3"/><rect x="57.5" y="4.5" width="11" height="2.2" fill="none" stroke="#3b79c1" stroke-width="1"/><path d="M58.6 6.8V16.3Q58.6 17.4 59.7 17.4H66.3Q67.4 17.4 67.4 16.3V6.8" fill="none" stroke="#3b79c1" stroke-width="1"/><path d="M60.6 7V12M62.5 7V12M64.4 7V12M66.2 7V12" stroke="#a8b8dc" stroke-width="0.8"/></svg>
<div class="b" style="left:23px;top:816px;width:1494px;height:1px;background:#c4c9ce"></div>
<div class="t" style="left:36.00px;top:788.00px;font-size:12.5px;line-height:12.5px;color:#262626;letter-spacing:0.752px;">16 May 2023 14:02:54.999</div>
<div class="t" style="left:349.50px;top:788.00px;font-size:12.5px;line-height:12.5px;color:#007bc0;letter-spacing:0.811px;">646370eec703677b598853e8</div>
<svg class="b" style="left:542.8px;top:789.4px" width="5" height="9" viewBox="0 0 5 9"><path d="M0.8 0.5Q4.6 4.5 0.8 8.5" fill="none" stroke="#007bc0" stroke-width="0.9"/></svg>
<div class="t" style="left:713.00px;top:783.00px;font-size:12.5px;line-height:12.5px;color:#007bc0;letter-spacing:0.883px;">Default pipeline</div>
<div class="t" style="left:713.00px;top:795.00px;font-size:9.5px;line-height:9.5px;color:#777c81;letter-spacing:0.620px;">63077608f51bd96ab15b75d5</div>
<svg class="b" style="left:981.5px;top:785.2px" width="16" height="16" viewBox="0 0 16 16"><circle cx="8" cy="8" r="7.6" fill="#78be20"/><path d="M4.6 8.2L7 10.4L11.4 6" fill="none" stroke="#fff" stroke-width="1.1"/></svg>
<svg class="b" style="left:1089.5px;top:786.1px" width="16" height="16" viewBox="0 0 16 16"><circle cx="8" cy="8" r="7.6" fill="#00a8b0"/><rect x="7.3" y="6.8" width="1.5" height="5" fill="#fff"/><rect x="7.3" y="4.2" width="1.5" height="1.5" fill="#fff"/></svg>
<div class="t" style="left:1113.90px;top:782.00px;font-size:12.5px;line-height:12.5px;color:#007bc0;letter-spacing:0.500px;">Processed Data</div>
<div class="t" style="left:1114.20px;top:797.00px;font-size:9.8px;line-height:9.8px;color:#71767c;letter-spacing:0.420px;">(14)</div>
<div class="t" style="left:1136.45px;top:797.00px;font-size:9.8px;line-height:9.8px;color:#007bc0;letter-spacing:0.420px;">View first 10 entries</div>
<svg class="b" style="left:1360px;top:784px" width="75" height="20" viewBox="0 0 75 20"><path d="M20.5 7V15.5H8" fill="none" stroke="#b9c7d3" stroke-width="1"/><rect x="6.5" y="5.5" width="12.5" height="8.2" fill="none" stroke="#3b79c1" stroke-width="1"/><path d="M7 11L10.5 8.6L14 11L17 9.4L19 10.5" fill="none" stroke="#3b79c1" stroke-width="0.9"/><circle cx="14" cy="7.8" r="0.8" fill="#3b79c1"/><path d="M40.5 4V10.5M38.8 8.6L40.5 10.6L42.2 8.6" fill="none" stroke="#3b85c9" stroke-width="0.9"/><rect x="34.5" y="12.5" width="11" height="3" fill="none" stroke="#3b79c1" stroke-width="1"/><rect x="61" y="2.3" width="4.6" height="1.8" fill="#b9c7d3"/><rect x="57.5" y="4.5" width="11" height="2.2" fill="none" stroke="#3b79c1" stroke-width="1"/><path d="M58.6 6.8V16.3Q58.6 17.4 59.7 17.4H66.3Q67.4 17.4 67.4 16.3V6.8" fill="none" stroke="#3b79c1" stroke-width="1"/><path d="M60.6 7V12M62.5 7V12M64.4 7V12M66.2 7V12" stroke="#a8b8dc" stroke-width="0.8"/></svg>
<svg class="b" style="left:25px;top:830px" width="160" height="20" viewBox="0 0 160 20"><path d="M5.8 5V15M12 5L7.3 10L12 15M33.2 5L28.3 10L33.2 15" fill="none" stroke="#dde1e4" stroke-width="1.4"/><path d="M102.2 5.2L106.8 9.9L102.2 14.6M123 5.2L127.8 9.9L123 14.6" fill="none" stroke="#1f74c2" stroke-width="1.1"/><path d="M129.4 5V15" stroke="#8fb6de" stroke-width="1"/><path d="M145.8 5.2A5.2 5.2 0 0 0 148.6 15.4" fill="none" stroke="#1f74c2" stroke-width="1.1"/><path d="M144.3 4.6H146.4V6.7Z" fill="#1f74c2" stroke="#1f74c2" stroke-width="0.8"/><path d="M148.8 4.4A5.2 5.2 0 0 1 151.8 14.2" fill="none" stroke="#a9c6e3" stroke-width="1.1"/><path d="M150.4 12.5V14.6H152.5" fill="none" stroke="#a9c6e3" stroke-width="0.9"/></svg>
<div class="t" style="left:80.00px;top:834.00px;font-size:12.5px;line-height:12.5px;color:#007bc0;letter-spacing:0.675px;">1 / 4</div>
<div class="t" style="left:198.00px;top:834.00px;font-size:12.5px;line-height:12.5px;color:#000;font-weight:bold;letter-spacing:0.000px;">1</div>
<div class="t" style="left:209.70px;top:834.00px;font-size:12.5px;line-height:12.5px;color:#000;letter-spacing:0.000px;">-</div>
<div class="t" style="left:218.00px;top:834.00px;font-size:12.5px;line-height:12.5px;color:#000;font-weight:bold;letter-spacing:1.400px;">10</div>
<div class="t" style="left:238.00px;top:834.00px;font-size:12.5px;line-height:12.5px;color:#000;letter-spacing:1.550px;">of</div>
<div class="t" style="left:254.00px;top:834.00px;font-size:12.5px;line-height:12.5px;color:#000;font-weight:bold;letter-spacing:1.200px;">33</div>
</body></html>
